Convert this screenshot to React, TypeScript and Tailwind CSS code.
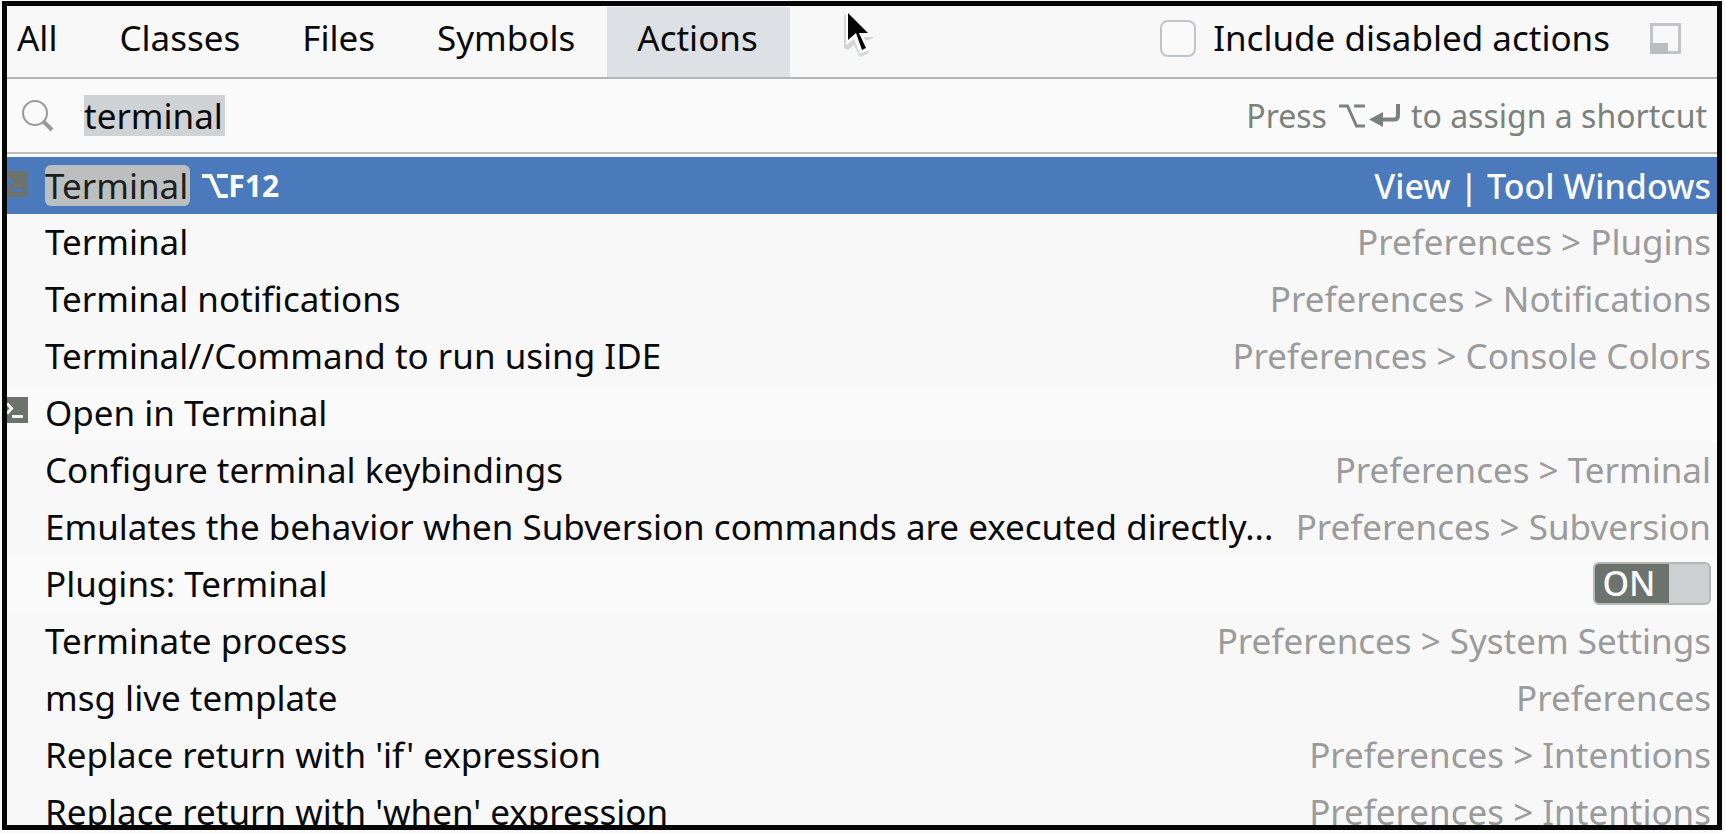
import { useState } from "react";

type Result = {
  name: string;
  path?: string;
  icon?: boolean;
  toggle?: boolean;
};

const tabs = ["All", "Classes", "Files", "Symbols", "Actions"];

const results: Result[] = [
  { name: "Terminal", path: "Preferences > Plugins" },
  { name: "Terminal notifications", path: "Preferences > Notifications" },
  { name: "Terminal//Command to run using IDE", path: "Preferences > Console Colors" },
  { name: "Open in Terminal", icon: true },
  { name: "Configure terminal keybindings", path: "Preferences > Terminal" },
  {
    name: "Emulates the behavior when Subversion commands are executed directly...",
    path: "Preferences > Subversion",
  },
  { name: "Plugins: Terminal", toggle: true },
  { name: "Terminate process", path: "Preferences > System Settings" },
  { name: "msg live template", path: "Preferences" },
  { name: "Replace return with 'if' expression", path: "Preferences > Intentions" },
  { name: "Replace return with 'when' expression", path: "Preferences > Intentions" },
];

function OptionKey({ className, strokeWidth }: { className: string; strokeWidth: number }) {
  return (
    <svg viewBox="0 0 26 24" className={className} fill="none" stroke="currentColor" strokeWidth={strokeWidth} role="img" aria-label="Option">
      <path d="M0 2h8.5l9 20H26M15 2h11" />
    </svg>
  );
}

function ReturnKey() {
  return (
    <svg viewBox="0 0 32 26" className="h-[26px] w-8 shrink-0" fill="none" role="img" aria-label="Return">
      <path d="M0 16.500L14 9v15z" fill="currentColor" />
      <path d="M12 16.500h13q4 0 4-4V1" stroke="currentColor" strokeWidth="4" />
    </svg>
  );
}

function TerminalIcon({ muted }: { muted?: boolean }) {
  return (
    <svg viewBox="0 0 21 26" className="h-[26px] w-[21px] shrink-0" aria-hidden="true">
      <path d="M0 0h21v26H0z" fill="#6b736c" />
      <path d="M0 6.500L4.500 11.500L0 16.500" fill="none" stroke={muted ? "#4b7abc" : "#fafafa"} strokeWidth="3" />
      <path d="M5 19.500h11" stroke={muted ? "#4b7abc" : "#fafafa"} strokeWidth="3" />
    </svg>
  );
}

function ResultRow({ result }: { result: Result }) {
  const [on, setOn] = useState(true);
  const plain = result.icon || result.toggle;
  return (
    <li className={`flex h-[57px] shrink-0 items-center pr-1.5 pb-0.5 ${plain ? "bg-[#fafafa]" : "bg-[#f8f8f8]"}`}>
      <span className="flex w-[38px] shrink-0 pb-1.5">{result.icon && <TerminalIcon />}</span>
      <span className="grow truncate text-[#0a0a0a]">{result.name}</span>
      {result.path && <span className="shrink-0 text-[#9b9b9b]">{result.path}</span>}
      {result.toggle && (
        <button
          type="button"
          role="switch"
          aria-checked={on}
          aria-label={result.name}
          onClick={() => setOn(!on)}
          className="flex h-[43px] w-[118px] shrink-0 overflow-hidden rounded-md border-2 border-[#b4b8b6] bg-[#cdd0d2] text-[34px] leading-[39px] font-medium text-[#fafafa]"
        >
          <span className="flex h-full w-[74px] items-center justify-center bg-[#6b736c] pr-1.5">ON</span>
        </button>
      )}
    </li>
  );
}

export default function App() {
  const [query, setQuery] = useState("terminal");
  const [active, setActive] = useState("Actions");

  return (
    <div className="relative h-screen bg-[#fafafa] pt-px pr-[3px] pb-[3px] pl-0.5 font-['Noto_Sans',sans-serif] text-[35px] leading-[48px]">
      <main className="flex h-full flex-col overflow-hidden border-[5px] border-[#060606] bg-[#fafafa] text-[#0a0a0a]">
        <header className="flex h-[73px] shrink-0 items-stretch border-b-2 border-[#b5b5b5] bg-[#f8f8f8] pt-px">
          <nav className="flex" aria-label="Search scope">
            {tabs.map((tab) => (
              <button
                key={tab}
                type="button"
                onClick={() => setActive(tab)}
                className={`pr-8 pb-2 ${tab === "All" ? "pl-2.5" : "pl-[30px]"} ${tab === active ? "bg-[#dde0e4]" : ""}`}
              >
                {tab}
              </button>
            ))}
          </nav>
          <div className="ml-auto flex items-center pr-9 pb-2">
            <label className="flex items-center gap-[17px]">
              <input
                type="checkbox"
                className="h-[37px] w-9 appearance-none rounded-lg border-2 border-[#c2c5c7] bg-[#fafafa] checked:bg-[#4b7abc]"
              />
              <span>Include disabled actions</span>
            </label>
            <button type="button" aria-label="Open in find tool window" className="ml-10">
              <svg viewBox="0 0 31 31" className="h-[31px] w-[31px]">
                <path d="M1.500 1.500h28v28h-28z" fill="none" stroke="#c2c5c5" strokeWidth="3" />
                <path d="M0 20h18v11H0z" fill="#bbbebe" />
              </svg>
            </button>
          </div>
        </header>

        <div className="flex h-[75px] shrink-0 items-center border-b-2 border-[#bdbdbd] pr-2.5 pl-[14px]">
          <svg viewBox="0 0 34 34" className="mr-[29px] h-[34px] w-[34px] shrink-0" fill="none" stroke="#9a9a9a" aria-hidden="true">
            <circle cx="14" cy="14" r="12" strokeWidth="2" />
            <path d="M22.500 22.500L31 31" strokeWidth="4" />
          </svg>
          <input
            type="text"
            aria-label="Search actions"
            value={query}
            onChange={(event) => setQuery(event.target.value)}
            className="h-[41px] rounded-none bg-[#d0d3d5] pr-0.5 outline-none [field-sizing:content]"
          />
          <p className="ml-auto flex items-center text-[32px] text-[#7b827c]">
            Press
            <OptionKey className="ml-3 h-6 w-[26px]" strokeWidth={3} />
            <span className="ml-1 flex">
              <ReturnKey />
            </span>
            <span className="ml-2.5">to assign a shortcut</span>
          </p>
        </div>

        <ul className="mt-[3px] flex min-h-0 grow flex-col overflow-hidden">
          <li className="flex h-[57px] shrink-0 items-center bg-[#4b7abc] pr-1.5 text-[#fafafa]">
            <span className="flex w-[38px] shrink-0 pb-1">
              <TerminalIcon muted />
            </span>
            <mark className="flex h-[41px] items-center rounded-md bg-[#bcbfbf] pr-0.5 text-[#1c201d]">Terminal</mark>
            <OptionKey className="ml-3 h-6 w-[26px]" strokeWidth={4} />
            <kbd className="font-['Noto_Sans',sans-serif] text-[30px] font-bold">F12</kbd>
            <span className="ml-auto text-[34px] font-medium">View | Tool Windows</span>
          </li>
          {results.map((result) => (
            <ResultRow key={result.name} result={result} />
          ))}
        </ul>
      </main>

      <svg viewBox="0 0 30 50" className="pointer-events-none absolute top-2 left-[844px] h-[50px] w-[30px]" aria-hidden="true">
        <path d="M0 6v34l4 2 6-5 6 12 9-4-4-12 9-3z" fill="#d3d6d9" />
        <path d="M2 1v36l8-6 6 15 9-4-5-13h9z" fill="#fdfdfd" />
        <path d="M4 5v27l8-7 6 17 4-2-7-15H24z" fill="#060606" />
      </svg>
    </div>
  );
}
